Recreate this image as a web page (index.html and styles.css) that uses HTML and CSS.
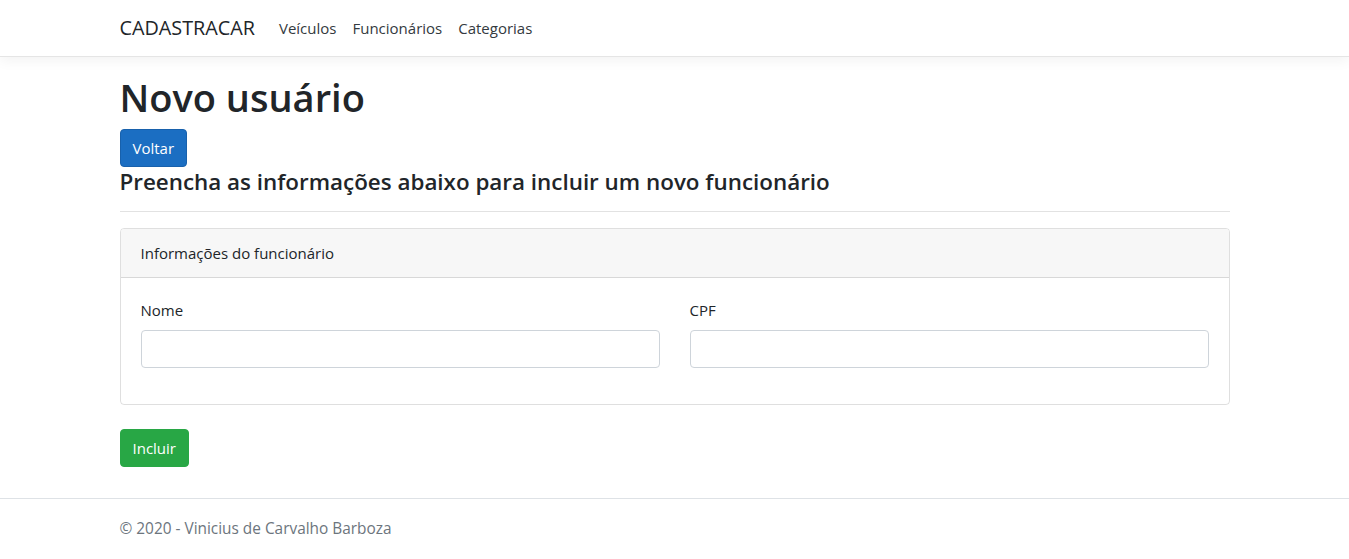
FILE: index.html
```html
<!DOCTYPE html>
<html lang="pt-br">
<head>
<meta charset="utf-8">
<title>Novo usuário - CadastraCar</title>
<link rel="stylesheet" href="styles.css">
</head>
<body>
<header class="navbar">
  <div class="container nav-inner">
    <a class="brand" href="#">CADASTRACAR</a>
    <nav class="nav-links">
      <a class="nav-link" href="#">Veículos</a>
      <a class="nav-link" href="#">Funcionários</a>
      <a class="nav-link" href="#">Categorias</a>
    </nav>
  </div>
</header>
<main class="container main">
  <h1 class="title">Novo usuário</h1>
  <a class="btn btn-primary" href="#">Voltar</a>
  <h4 class="subtitle">Preencha as informações abaixo para incluir um novo funcionário</h4>
  <hr class="divider">
  <form>
    <div class="card">
      <div class="card-header">Informações do funcionário</div>
      <div class="card-body">
        <div class="row">
          <div class="col">
            <label class="label" for="nome">Nome</label>
            <input class="input" id="nome" type="text">
          </div>
          <div class="col">
            <label class="label" for="cpf">CPF</label>
            <input class="input" id="cpf" type="text">
          </div>
        </div>
      </div>
    </div>
    <button class="btn btn-success" type="button">Incluir</button>
  </form>
</main>
<footer class="footer">
  <div class="container">© 2020 - Vinicius de Carvalho Barboza</div>
</footer>
</body>
</html>
```
FILE: styles.css
```css
* { box-sizing: border-box; }
html, body { margin: 0; padding: 0; }
body {
  font-family: "Open Sans", "Noto Sans", sans-serif;
  font-size: 15px;
  line-height: 1.5;
  color: #212529;
  background: #fff;
  min-height: 559px;
  display: flex;
  flex-direction: column;
}
.container {
  width: 1140px;
  margin: 0 auto;
  padding: 0 15px;
}
.navbar {
  height: 57px;
  border-bottom: 1px solid #e5e5e5;
  box-shadow: 0 4px 12px rgba(0,0,0,0.05);
  background: #fff;
}
.nav-inner {
  display: flex;
  align-items: center;
  height: 56px;
}
.brand {
  font-size: 19.8px;
  color: #212529;
  text-decoration: none;
  margin-right: 16px;
}
.nav-links { display: flex; }
.nav-link {
  color: #343a40;
  text-decoration: none;
  padding: 0 8px;
}
.main { padding-top: 16px; }
.title {
  font-size: 38px;
  font-weight: 600;
  line-height: 48px;
  margin: 0 0 8px;
}
.btn {
  display: inline-block;
  font-family: inherit;
  font-size: 15px;
  line-height: 24px;
  padding: 6px 12px;
  border: 1px solid transparent;
  border-radius: 4px;
  color: #fff;
  text-decoration: none;
  cursor: pointer;
}
.btn-primary { background: #1b6ec2; border-color: #1861ac; }
.btn-success { background: #28a745; border-color: #28a745; }
.subtitle {
  font-size: 22.4px;
  font-weight: 600;
  line-height: 29px;
  margin: 0;
}
.divider {
  border: 0;
  border-top: 1px solid #e2e2e2;
  margin: 15px 0 16px;
}
.card {
  border: 1px solid rgba(0,0,0,0.125);
  border-radius: 4px;
  margin-bottom: 24px;
}
.card-header {
  background: #f7f7f7;
  border-bottom: 1px solid rgba(0,0,0,0.125);
  padding: 12px 20px;
  line-height: 24px;
  border-radius: 3px 3px 0 0;
}
.card-body { padding: 20px; }
.row {
  display: grid;
  grid-template-columns: 1fr 1fr;
  column-gap: 30px;
}
.col { padding-bottom: 16px; }
.label {
  display: block;
  margin-bottom: 8px;
  line-height: 24px;
}
.input {
  display: block;
  width: 100%;
  height: 38px;
  border: 1px solid #ced4da;
  border-radius: 4px;
  font-family: inherit;
  font-size: 15px;
  padding: 6px 12px;
}
.footer {
  margin-top: auto;
  border-top: 1px solid #dee2e6;
  height: 61px;
  line-height: 60px;
  color: #6c757d;
  font-size: 15.4px;
}
```
